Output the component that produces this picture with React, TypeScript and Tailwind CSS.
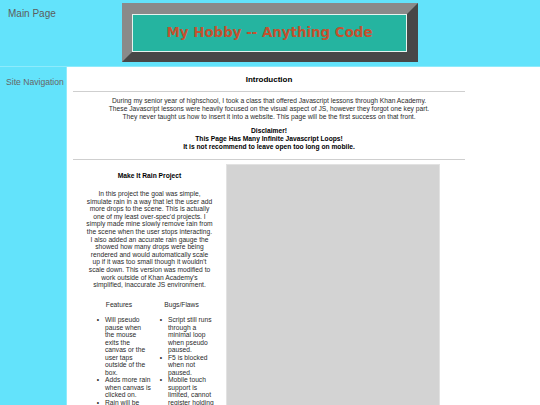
import React from "react";

function Item({ lines }: { lines: string[] }) {
  return (
    <li className="flex">
      <span className="w-[11px] shrink-0 text-right pr-[3px]">•</span>
      <span className="ml-[3px] whitespace-nowrap">
        {lines.map((l, i) => (
          <React.Fragment key={i}>
            {i > 0 && <br />}
            {l}
          </React.Fragment>
        ))}
      </span>
    </li>
  );
}

export default function App() {
  const font = { fontFamily: '"Liberation Sans", Arial, sans-serif' };
  return (
    <div className="w-[540px] h-[405px] overflow-hidden bg-[#63e3fb] text-[#2a2a2a]" style={font}>
      {/* top row */}
      <div className="flex h-[67px] border-b border-[#8eebfc]">
        <div className="w-[67px] shrink-0 pl-[8px] pt-[7px] text-[10px] leading-[13px] text-[#5c5c5c]">
          Main Page
        </div>
        <div className="ml-[55px] mt-[3px] w-[296px] h-[59px] flex border-t-[11px] border-l-[10px] border-b-[10px] border-r-[11px] border-t-[#8a8a8a] border-l-[#8a8a8a] border-b-[#474747] border-r-[#474747]">
          <div className="flex-1 flex items-center justify-center bg-[#25b4a0] border border-[#e6f4ef]">
            <span
              className="text-[13.4px] font-bold text-[#c4512f] leading-none"
              style={{ fontFamily: '"DejaVu Sans", Verdana, sans-serif' }}
            >
              My Hobby -- Anything Code
            </span>
          </div>
        </div>
      </div>
      {/* bottom row */}
      <div className="flex">
        <div className="w-[67px] shrink-0 border-r border-[#8eebfc] pl-[6px] pt-[10px] text-[8.6px] leading-[10px] text-[#666]">
          Site Navigation
        </div>
        <div className="flex-1 bg-white h-[340px]">
          <div className="ml-[6px] w-[392px] text-center">
            <div className="pt-[8px] text-[8px] font-bold leading-[9px] text-black">Introduction</div>
            <div className="mt-[7px] border-t border-[#cfcfcf]" />
            <p className="mt-[5px] text-[6.7px] leading-[8px] whitespace-nowrap">
              During my senior year of highschool, I took a class that offered Javascript lessons through Khan Academy.
              <br />
              These Javascript lessons were heavily focused on the visual aspect of JS, however they forgot one key part.
              <br />
              They never taught us how to insert it into a website. This page will be the first success on that front.
            </p>
            <p className="mt-[6px] text-[6.7px] leading-[8px] font-bold text-black whitespace-nowrap">
              Disclaimer!
              <br />
              This Page Has Many Infinite Javascript Loops!
              <br />
              It is not recommend to leave open too long on mobile.
            </p>
            <div className="mt-[8px] border-t border-[#cfcfcf]" />
            <div className="flex">
              <div className="w-[153px] shrink-0 px-[13px]">
                <div className="mt-[12px] text-[6.7px] leading-[8px] font-bold text-black">Make It Rain Project</div>
                <p className="mt-[10px] text-[6.7px] leading-[7.6px] whitespace-nowrap">
                  In this project the goal was simple,
                  <br />
                  simulate rain in a way that let the user add
                  <br />
                  more drops to the scene. This is actually
                  <br />
                  one of my least over-spec'd projects. I
                  <br />
                  simply made mine slowly remove rain from
                  <br />
                  the scene when the user stops interacting.
                  <br />
                  I also added an accurate rain gauge the
                  <br />
                  showed how many drops were being
                  <br />
                  rendered and would automatically scale
                  <br />
                  up if it was too small though it wouldn't
                  <br />
                  scale down. This version was modified to
                  <br />
                  work outside of Khan Academy's
                  <br />
                  simplified, inaccurate JS environment.
                </p>
                <div className="mt-[12px] ml-[1px] flex text-[6.7px] leading-[7.5px]">
                  <div className="w-1/2">
                    <div className="pl-[1px]">Features</div>
                    <ul className="mt-[8px] ml-[4px] text-left">
                      <Item lines={["Will pseudo", "pause when", "the mouse", "exits the", "canvas or the", "user taps", "outside of the", "box."]} />
                      <Item lines={["Adds more rain", "when canvas is", "clicked on."]} />
                      <Item lines={["Rain will be"]} />
                    </ul>
                  </div>
                  <div className="w-1/2">
                    <div>Bugs/Flaws</div>
                    <ul className="mt-[8px] ml-[4px] text-left">
                      <Item lines={["Script still runs", "through a", "minimal loop", "when pseudo", "paused."]} />
                      <Item lines={["F5 is blocked", "when not", "paused."]} />
                      <Item lines={["Mobile touch", "support is", "limited, cannot", "register holding"]} />
                    </ul>
                  </div>
                </div>
              </div>
              <div className="mt-[4px] w-[214px] h-[260px] bg-[#d3d3d3] border border-[#e2e2e2]" />
            </div>
          </div>
        </div>
      </div>
    </div>
  );
}
